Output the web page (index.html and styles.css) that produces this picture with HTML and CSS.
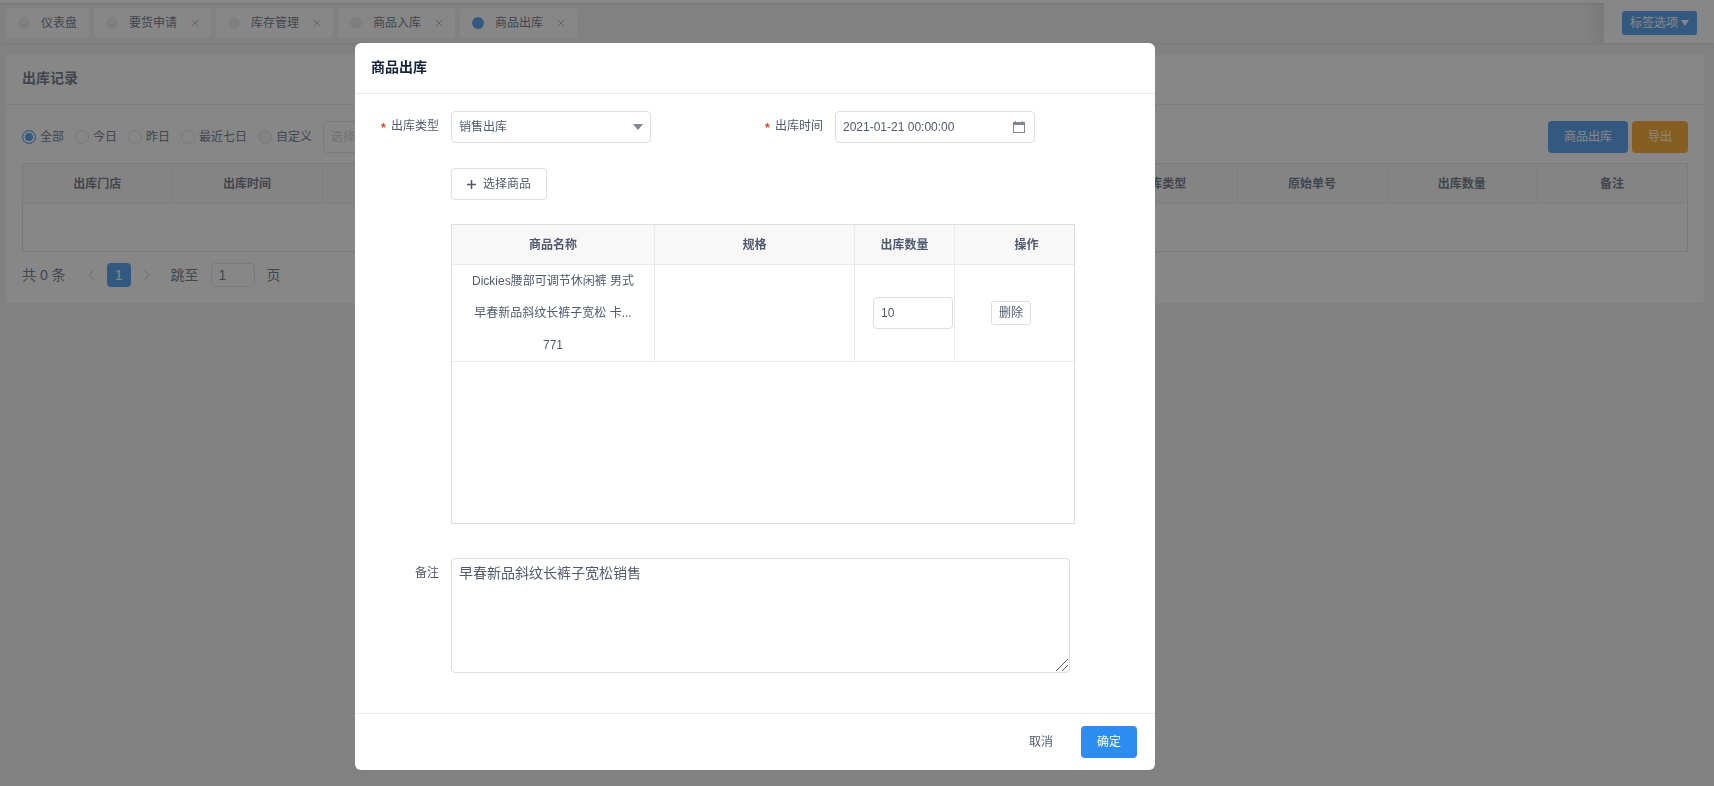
FILE: index.html
```html
<!DOCTYPE html>
<html lang="zh-CN">
<head>
  <meta charset="UTF-8" />
  <title>商品出库</title>
  <meta name="viewport" content="width=device-width, initial-scale=1.0" />
  <link rel="stylesheet" href="styles.css">
</head>
<body>
  <div class="topbar"></div>
  <nav class="tags">
    <div class="tags-list">
      <a class="tag" href="#"><i class="dot"></i>仪表盘</a>
      <a class="tag" href="#"><i class="dot"></i>要货申请<svg class="close" viewBox="0 0 8 8"><path d="M.5 .5l7 7M7.5 .5l-7 7" /></svg></a>
      <a class="tag" href="#"><i class="dot"></i>库存管理<svg class="close" viewBox="0 0 8 8"><path d="M.5 .5l7 7M7.5 .5l-7 7" /></svg></a>
      <a class="tag" href="#"><i class="dot"></i>商品入库<svg class="close" viewBox="0 0 8 8"><path d="M.5 .5l7 7M7.5 .5l-7 7" /></svg></a>
      <a class="tag" href="#"><i class="dot active"></i>商品出库<svg class="close" viewBox="0 0 8 8"><path d="M.5 .5l7 7M7.5 .5l-7 7" /></svg></a>
    </div>
    <div class="tags-option">
      <button type="button" class="btn btn-primary btn-small">标签选项<svg class="caret" viewBox="0 0 8 6"><path d="M0 0h8L4 6z" /></svg></button>
    </div>
  </nav>

  <main class="card">
    <h2 class="card-head">出库记录</h2>
    <div class="card-body">
      <div class="toolbar">
        <div class="filters">
          <label class="radio"><input type="radio" name="range" checked />全部</label>
          <label class="radio"><input type="radio" name="range" />今日</label>
          <label class="radio"><input type="radio" name="range" />昨日</label>
          <label class="radio"><input type="radio" name="range" />最近七日</label>
          <label class="radio"><input type="radio" name="range" disabled />自定义</label>
          <input class="input range-input" type="text" placeholder="选择" aria-label="选择" />
        </div>
        <div class="actions">
          <button type="button" class="btn btn-primary">商品出库</button>
          <button type="button" class="btn btn-warning">导出</button>
        </div>
      </div>

      <table class="table record-table">
        <thead>
          <tr>
            <th class="col">出库门店</th>
            <th class="col">出库时间</th>
            <th></th>
            <th class="col">出库类型</th>
            <th class="col">原始单号</th>
            <th class="col">出库数量</th>
            <th class="col">备注</th>
          </tr>
        </thead>
        <tbody>
          <tr><td colspan="7"></td></tr>
        </tbody>
      </table>

      <div class="pager">
        <span>共 0 条</span>
        <button type="button" class="pager-arrow" aria-label="上一页"><svg viewBox="0 0 6 10"><path d="M5.5 .5L1 5l4.500 4.500" /></svg></button>
        <button type="button" class="pager-page">1</button>
        <button type="button" class="pager-arrow" aria-label="下一页"><svg viewBox="0 0 6 10"><path d="M.5 .5L5 5L.5 9.500" /></svg></button>
        <label class="pager-jump">跳至<input class="input" type="text" value="1" />页</label>
      </div>
    </div>
  </main>

  <div class="mask">
    <form class="modal" role="dialog" aria-labelledby="modal-title">
      <h2 class="modal-head" id="modal-title">商品出库</h2>
      <div class="modal-body">
        <div class="form-row">
          <div class="form-item">
            <label class="required" for="type">出库类型</label>
            <div class="control">
              <select class="input" id="type"><option>销售出库</option></select>
              <svg class="select-arrow" viewBox="0 0 10 6"><path d="M0 0h10L5 6z" /></svg>
            </div>
          </div>
          <div class="form-item">
            <label class="required" for="time">出库时间</label>
            <div class="control">
              <input class="input" id="time" type="text" value="2021-01-21 00:00:00" />
              <svg class="date-icon" viewBox="0 0 12 12"><path d="M0 1h2V0h1v1h6V0h1v1h2v11H0zM1 4v7h10V4z" fill-rule="evenodd" /></svg>
            </div>
          </div>
        </div>

        <div class="form-content">
          <button type="button" class="btn btn-default"><svg class="plus" viewBox="0 0 9 9"><path d="M4.500 0v9M0 4.500h9" /></svg>选择商品</button>
        </div>

        <div class="form-content goods">
          <table class="table goods-table">
            <thead>
              <tr>
                <th class="col-name">商品名称</th>
                <th class="col-spec">规格</th>
                <th class="col-num">出库数量</th>
                <th class="col-action">操作</th>
              </tr>
            </thead>
            <tbody>
              <tr>
                <td>Dickies腰部可调节休闲裤 男式<br>早春新品斜纹长裤子宽松 卡...<br>771</td>
                <td></td>
                <td class="cell-num"><input class="input" type="text" value="10" aria-label="出库数量" /></td>
                <td class="cell-action"><button type="button" class="btn btn-default btn-small">删除</button></td>
              </tr>
            </tbody>
          </table>
        </div>

        <div class="form-item remark">
          <label for="remark">备注</label>
          <div class="remark-box">
            <textarea class="input" id="remark">早春新品斜纹长裤子宽松销售</textarea>
            <svg class="grip" viewBox="0 0 12 12"><path d="M0 12L12 0M6 12L12 6" /></svg>
          </div>
        </div>
      </div>
      <div class="modal-foot">
        <button type="button" class="btn btn-text">取消</button>
        <button type="submit" class="btn btn-primary">确定</button>
      </div>
    </form>
  </div>
</body>
</html>
```

FILE: styles.css
```css
* {
  box-sizing: border-box;
}

body {
  margin: 0;
  min-height: 100vh;
  background: #f0f0f0;
  color: #515a6e;
  font-family: "Liberation Sans", "Noto Sans CJK SC", sans-serif;
  font-size: 12px;
  line-height: 18px;
}

button,
input,
select,
textarea {
  margin: 0;
  font: inherit;
  color: inherit;
}

h2 {
  margin: 0;
  font-size: 14px;
  line-height: 20px;
}

/* tags nav */
.topbar {
  position: relative;
  height: 3px;
  background: #fff;
  box-shadow: 0 2px 2px rgba(0, 0, 0, 0.1);
}

.tags {
  display: flex;
  height: 40px;
  box-shadow: 0 2px 2px rgba(0, 0, 0, 0.06);
}

.tags-list {
  flex: 1;
  display: flex;
  align-items: center;
  gap: 5px;
  padding: 0 6px;
}

.tag {
  display: flex;
  align-items: center;
  height: 30px;
  padding: 0 12px;
  border-radius: 3px;
  background: #fff;
  color: #515a6e;
  line-height: 20px;
  text-decoration: none;
}

.dot {
  width: 12px;
  height: 12px;
  margin-right: 11px;
  border-radius: 50%;
  background: #e8eaec;
}

.dot.active {
  background: #2d8cf0;
}

.close {
  width: 8px;
  height: 8px;
  margin-left: 14px;
  fill: none;
  stroke: #aaa;
}

.tags-option {
  padding: 8px 17px 8px 18px;
  background: #fff;
  box-shadow: -3px 0 15px 3px rgba(0, 0, 0, 0.1);
  clip-path: inset(0 0 0 -20px);
}

/* buttons */
.btn {
  display: inline-flex;
  align-items: center;
  justify-content: center;
  height: 32px;
  padding: 0 15px;
  border: 1px solid transparent;
  border-radius: 4px;
  cursor: pointer;
}

.btn-primary {
  background: #2d8cf0;
  color: #fff;
}

.btn-warning {
  background: #f90;
  color: #fff;
}

.btn-default {
  background: #fff;
  border-color: #dcdee2;
}

.btn-text {
  background: transparent;
}

.btn-small {
  height: 24px;
  padding: 0 7px;
  border-radius: 3px;
}

.caret {
  width: 8px;
  height: 6px;
  margin-left: 3px;
  fill: #fff;
}

.plus {
  width: 9px;
  height: 9px;
  margin-right: 7px;
  fill: none;
  stroke: #515a6e;
  stroke-width: 1.5;
}

.input {
  width: 100%;
  height: 32px;
  padding: 0 7px;
  border: 1px solid #dcdee2;
  border-radius: 4px;
  background: #fff;
  outline: none;
  appearance: none;
}

.input::placeholder {
  color: #c5c8ce;
}

/* record list */
.card {
  margin: 11px 10px 0 6px;
  border-radius: 4px;
  background: #fff;
}

.card-head {
  padding: 14px 16px 16px;
  border-bottom: 1px solid #e8eaec;
}

.card-body {
  padding: 16px;
}

.toolbar {
  display: flex;
  justify-content: space-between;
}

.filters {
  display: flex;
  align-items: center;
  gap: 11px;
}

.radio {
  display: flex;
  align-items: center;
  gap: 4px;
}

.radio input {
  width: 14px;
  height: 14px;
  border: 1px solid #dcdee2;
  border-radius: 50%;
  background: #fff;
  appearance: none;
}

.radio input:checked {
  border-color: #2d8cf0;
  background: #2d8cf0;
  box-shadow: inset 0 0 0 2px #fff;
}

.radio input:disabled {
  background: #f3f3f3;
}

.range-input {
  width: 200px;
}

.actions {
  display: flex;
  gap: 4px;
}

.table {
  width: 100%;
  table-layout: fixed;
  border-collapse: separate;
  border-spacing: 0;
  text-align: center;
}

.table th {
  height: 40px;
  padding: 0;
  background: #f8f8f9;
  border-right: 1px solid #e8eaec;
  border-bottom: 1px solid #e8eaec;
}

.table td {
  padding: 0;
  border-right: 1px solid #e8eaec;
}

.table th:last-child,
.table td:last-child {
  border-right: none;
}

.record-table {
  margin-top: 10px;
  border: 1px solid #dcdee2;
}

.record-table td {
  height: 47px;
}

.record-table .col {
  width: 9%;
}

.pager {
  display: flex;
  align-items: center;
  height: 24px;
  margin-top: 11px;
  font-size: 14px;
}

.pager-arrow {
  width: 24px;
  height: 24px;
  padding: 0;
  border: none;
  background: none;
}

.pager-arrow svg {
  width: 6px;
  height: 10px;
  fill: none;
  stroke: #b0b3ba;
}

.pager-page {
  width: 24px;
  height: 24px;
  margin: 0 4px;
  padding: 0;
  border: none;
  border-radius: 4px;
  background: #2d8cf0;
  color: #fff;
}

.pager > span {
  margin-right: 13px;
}

.pager-jump {
  display: flex;
  align-items: center;
  gap: 12px;
  margin-left: 12px;
}

.pager-jump .input {
  width: 44px;
  height: 24px;
}

.mask {
  position: fixed;
  inset: 0;
  z-index: 10;
  padding: 43px 204px 16px 0;
  background: rgba(55, 55, 55, 0.6);
  overflow: auto;
}

.modal {
  max-width: 800px;
  margin: 0 auto;
  border-radius: 6px;
  background: #fff;
}

.modal-head {
  padding: 14px 16px 16px;
  border-bottom: 1px solid #e8eaec;
  color: #17233d;
}

.modal-body {
  padding: 17px 16px 40px;
}

.form-row {
  display: grid;
  grid-template-columns: 1fr 1fr;
  margin-bottom: 25px;
}

.form-item {
  display: flex;
}

.form-item label {
  flex: none;
  width: 80px;
  padding-right: 12px;
  line-height: 30px;
  text-align: right;
}

.required::before {
  content: "*";
  display: inline-block;
  margin-right: 4px;
  color: #ed4014;
  font-family: "Liberation Mono", monospace;
  font-weight: bold;
  line-height: 1;
  vertical-align: -2px;
}

.control {
  position: relative;
  width: 200px;
}

.select-arrow {
  position: absolute;
  top: 13px;
  right: 8px;
  width: 10px;
  height: 6px;
  fill: #808695;
  pointer-events: none;
}

.date-icon {
  position: absolute;
  top: 10px;
  right: 10px;
  width: 12px;
  height: 12px;
  fill: #808695;
}

.form-content {
  margin: 0 64px 24px 80px;
}

.goods {
  min-height: 300px;
  margin-bottom: 34px;
  border: 1px solid #dcdee2;
}

.goods-table td {
  height: 97px;
  border-bottom: 1px solid #e8eaec;
  line-height: 32px;
}

.col-name {
  width: 203px;
}

.col-spec {
  width: 200px;
}

.col-num {
  width: 100px;
}

.goods-table .col-action {
  padding-left: 24px;
}

.cell-num .input {
  display: block;
  width: 80px;
  margin-left: 18px;
}

.goods-table .cell-action {
  padding-right: 7px;
}

.remark {
  margin-right: 69px;
}

.remark-box {
  position: relative;
  flex: 1;
}

.remark .input {
  display: block;
  height: 115px;
  padding: 4px 7px;
  font-size: 14px;
  line-height: 20px;
  resize: vertical;
}

.remark .input::-webkit-resizer {
  background: transparent;
}

.grip {
  position: absolute;
  right: 2px;
  bottom: 2px;
  width: 12px;
  height: 12px;
  fill: none;
  stroke: #555;
  pointer-events: none;
}

.modal-foot {
  display: flex;
  justify-content: flex-end;
  gap: 12px;
  padding: 12px 18px 12px 16px;
  border-top: 1px solid #e8eaec;
}
```
